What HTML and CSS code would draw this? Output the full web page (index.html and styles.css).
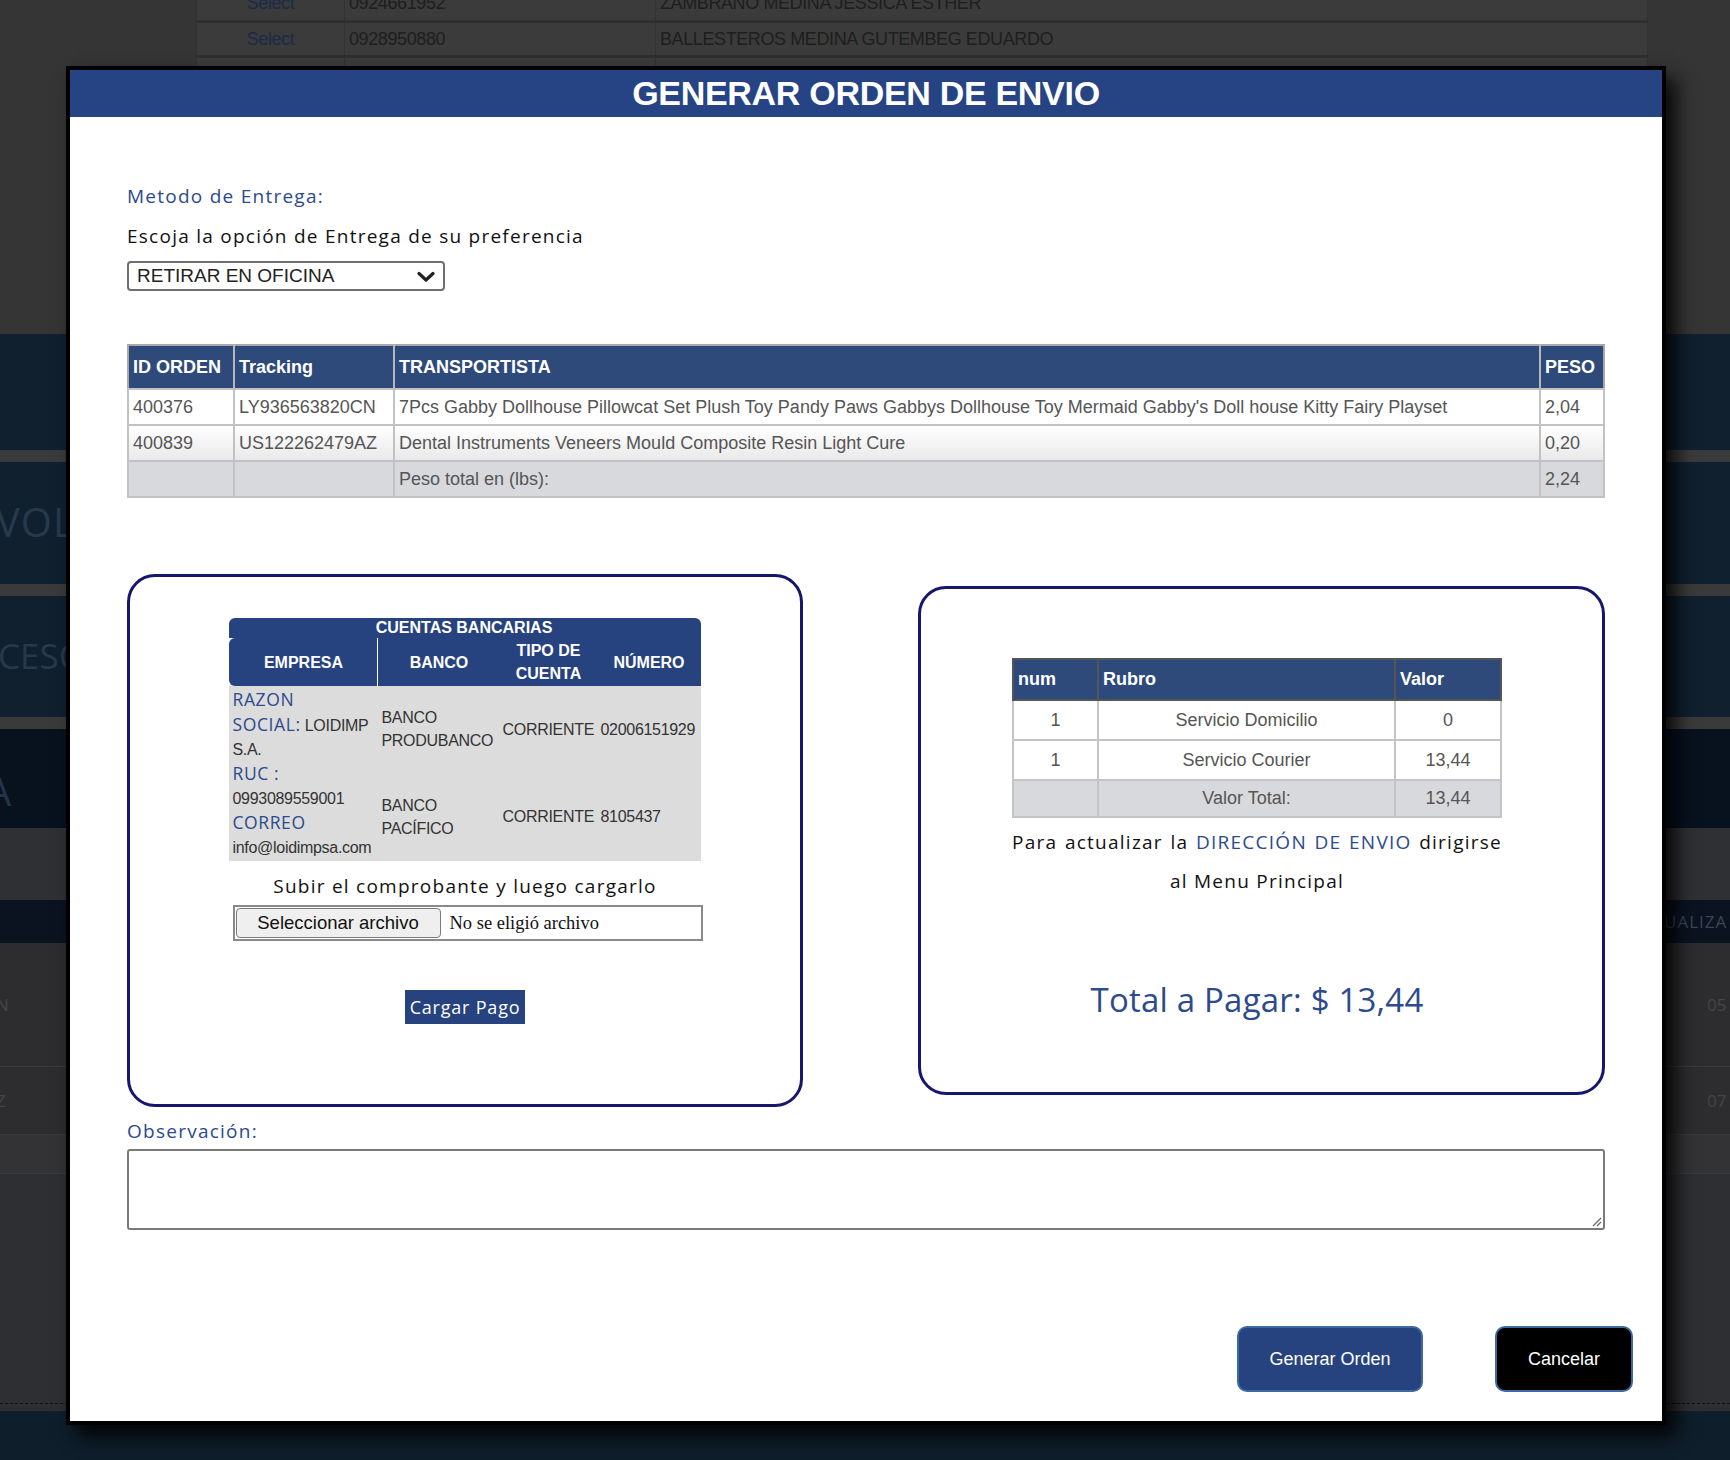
FILE: index.html
```html
<!DOCTYPE html>
<html lang="es">
<head>
<meta charset="utf-8">
<title>Generar Orden de Envio</title>
<link rel="stylesheet" href="styles.css">
</head>
<body>
<div class="page">
  <div class="top">
    <table class="bg-table">
      <tr><td class="sel">Select</td><td>0924661952</td><td>ZAMBRANO MEDINA JESSICA ESTHER</td></tr>
      <tr><td class="sel">Select</td><td>0928950880</td><td>BALLESTEROS MEDINA GUTEMBEG EDUARDO</td></tr>
      <tr><td class="sel"></td><td></td><td></td></tr>
    </table>
  </div>
  <div class="band b1"></div>
  <div class="sep"></div>
  <div class="band b2"><span class="band-txt">VOLUCIONES</span></div>
  <div class="sep"></div>
  <div class="band b3"><span class="band-txt">CESOS</span></div>
  <div class="sep"></div>
  <div class="band b4"><span class="band-txt cut">A</span></div>
  <div class="gap"></div>
  <div class="bg-head"><span class="ualiza">UALIZA</span></div>
  <div class="bg-row r1"><span class="l">N</span><span class="r">05</span></div>
  <div class="bg-row r2"><span class="l">Z</span><span class="r">07</span></div>
  <div class="bg-row r3"></div>
  <div class="bg-fill"></div>
  <div class="bg-foot"></div>
</div>

<div class="modal">
  <div class="modal-head">GENERAR ORDEN DE ENVIO</div>
  <div class="modal-body">
    <div class="mtext blue">Metodo de Entrega:</div>
    <div class="mtext choose">Escoja la opción de Entrega de su preferencia</div>
    <div class="select">
      <span>RETIRAR EN OFICINA</span>
      <svg class="chev" width="18" height="12" viewBox="0 0 18 12"><path d="M2 2.5 L9 9 L16 2.5" fill="none" stroke="#222" stroke-width="3.2" stroke-linecap="round" stroke-linejoin="round"/></svg>
    </div>

    <table class="orders">
      <colgroup><col class="c-id"><col class="c-tr"><col class="c-desc"><col class="c-peso"></colgroup>
      <thead>
        <tr><th>ID ORDEN</th><th>Tracking</th><th>TRANSPORTISTA</th><th>PESO</th></tr>
      </thead>
      <tbody>
        <tr class="w"><td>400376</td><td>LY936563820CN</td><td>7Pcs Gabby Dollhouse Pillowcat Set Plush Toy Pandy Paws Gabbys Dollhouse Toy Mermaid Gabby's Doll house Kitty Fairy Playset</td><td>2,04</td></tr>
        <tr class="g"><td>400839</td><td>US122262479AZ</td><td>Dental Instruments Veneers Mould Composite Resin Light Cure</td><td>0,20</td></tr>
        <tr class="t"><td></td><td></td><td>Peso total en (lbs):</td><td>2,24</td></tr>
      </tbody>
    </table>

    <div class="boxes">
      <div class="box box-left">
        <table class="bank">
          <colgroup><col class="b-emp"><col class="b-ban"><col class="b-tipo"><col class="b-num"></colgroup>
          <thead>
            <tr><th colspan="4" class="title">CUENTAS BANCARIAS</th></tr>
            <tr><th class="emp">EMPRESA</th><th>BANCO</th><th>TIPO DE CUENTA</th><th>NÚMERO</th></tr>
          </thead>
          <tbody>
            <tr class="br1">
              <td rowspan="2" class="empresa">
                <span class="bl">RAZON</span><br>
                <span class="bl">SOCIAL:</span> LOIDIMP<br>S.A.<br>
                <span class="bl">RUC :</span><br>0993089559001<br>
                <span class="bl">CORREO</span><br>info@loidimpsa.com
              </td>
              <td>BANCO PRODUBANCO</td><td>CORRIENTE</td><td>02006151929</td>
            </tr>
            <tr class="br2"><td>BANCO PACÍFICO</td><td>CORRIENTE</td><td>8105437</td></tr>
          </tbody>
        </table>
        <div class="upload-txt">Subir el comprobante y luego cargarlo</div>
        <div class="file">
          <span class="file-btn">Seleccionar archivo</span>
          <span class="file-none">No se eligió archivo</span>
        </div>
        <button class="cargar">Cargar Pago</button>
      </div>

      <div class="box box-right">
        <table class="rubros">
          <colgroup><col class="r-num"><col class="r-rub"><col class="r-val"></colgroup>
          <thead><tr><th>num</th><th>Rubro</th><th>Valor</th></tr></thead>
          <tbody>
            <tr><td>1</td><td>Servicio Domicilio</td><td>0</td></tr>
            <tr><td>1</td><td>Servicio Courier</td><td>13,44</td></tr>
            <tr class="t"><td></td><td>Valor Total:</td><td>13,44</td></tr>
          </tbody>
        </table>
        <div class="note">
          <div class="note-l1">Para actualizar la <span class="bl">DIRECCIÓN DE ENVIO</span> dirigirse</div>
          <div class="note-l2">al Menu Principal</div>
        </div>
        <div class="total">Total a Pagar: $ 13,44</div>
      </div>
    </div>

    <div class="mtext blue obs">Observación:</div>
    <div class="textarea">
      <svg class="grip" width="12" height="12" viewBox="0 0 12 12"><path d="M11 3 L3 11 M11 7 L7 11" stroke="#666" stroke-width="1.2" fill="none"/></svg>
    </div>
  </div>
  <div class="actions">
    <button class="btn gen">Generar Orden</button>
    <button class="btn cancel">Cancelar</button>
  </div>
</div>
</body>
</html>
```

FILE: styles.css
```css
* { box-sizing: border-box; }
html, body { margin: 0; padding: 0; }
body {
  width: 1730px;
  height: 1460px;
  overflow: hidden;
  background: #353535;
  font-family: "Liberation Sans", Arial, sans-serif;
  position: relative;
}

/* ---------- background page (dimmed) ---------- */
.page { width: 1730px; }
.top {
  height: 334px;
  background: #353535;
  padding-left: 196px;
  overflow: hidden;
}
.bg-table {
  width: 1452px;
  margin-top: -14px;
  border-collapse: collapse;
  background: #3b3b3b;
  font-size: 18px;
  color: #1e1e1e;
}
.bg-table td {
  height: 35px;
  padding: 0 4px;
  border: 1px solid #323232;
  border-bottom: 3px solid #2f2f2f;
  letter-spacing: -0.4px;
}
.bg-table td:nth-child(1) { width: 148px; text-align: center; color: #1b2a48; }
.bg-table td:nth-child(2) { width: 311px; }

.band { position: relative; overflow: hidden; background: #10202f; }
.b1 { height: 116px; }
.b2 { height: 122px; }
.b3 { height: 121px; }
.b4 { height: 99px; background: #08111e; }
.sep { height: 12px; background: #3a3a3a; }
.band-txt {
  display: block;
  font-family: "Open Sans", sans-serif;
  font-size: 40px;
  line-height: 1;
  color: #27394c;
  letter-spacing: 1px;
  padding-top: 40px;
  margin-left: -4px;
}
.b3 .band-txt { font-size: 35px; letter-spacing: 0; margin-left: -2px; padding-top: 42px; }
.b4 .band-txt { padding-top: 42px; color: #23344a; }
.band-txt.cut { margin-left: -14px; }
.gap { height: 72px; background: #2f3034; }
.bg-head {
  height: 43px;
  background: #0b1320;
  display: flex;
  justify-content: flex-end;
  align-items: center;
}
.ualiza {
  width: 66px;
  font-family: "Open Sans", sans-serif;
  font-size: 17px;
  color: #3b4654;
  letter-spacing: 1px;
  overflow: hidden;
  white-space: nowrap;
}
.bg-row {
  display: flex;
  justify-content: space-between;
  align-items: center;
  background: #2d2d2f;
  border-bottom: 1px solid #3a3a3c;
  font-family: "Open Sans", sans-serif;
  font-size: 17px;
  color: #454545;
}
.r1 { height: 124px; }
.r2 { height: 68px; }
.r3 { height: 39px; background: #333336; }
.bg-row .l { margin-left: -4px; }
.bg-row .r { width: 23px; overflow: hidden; }
.bg-fill {
  height: 230px;
  background: #2e2f33;
  border-bottom: 1px dashed #111;
}
.bg-foot { height: 60px; border-top: 7px solid #2e2f33; background: #0f1e2b; }

/* ---------- modal ---------- */
.modal {
  position: absolute;
  left: 66px;
  top: 66px;
  width: 1600px;
  border: 4px solid #000;
  background: #fff;
  box-shadow: 10px 12px 18px rgba(0,0,0,0.85);
}
.modal-head {
  height: 47px;
  background: #264384;
  color: #fff;
  text-align: center;
  font-family: "Liberation Sans", Arial, sans-serif;
  font-weight: bold;
  font-size: 34px;
  line-height: 46px;
  letter-spacing: -0.3px;
}
.modal-body {
  padding: 66px 57px 0 57px;
}
.mtext {
  font-family: "Open Sans", sans-serif;
  font-size: 19px;
  line-height: 26px;
  color: #111;
  letter-spacing: 1.25px;
}
.blue { color: #2c4a8c; }
.choose { margin-top: 14px; }
.select {
  margin-top: 12px;
  width: 318px;
  height: 30px;
  border: 2px solid #6f6f6f;
  border-radius: 4px;
  display: flex;
  align-items: center;
  justify-content: space-between;
  padding: 0 8px 0 8px;
  font-size: 19px;
  color: #222;
}
.chev { margin-top: 1px; }

/* orders table */
.orders {
  margin-top: 53px;
  width: 1478px;
  border-collapse: collapse;
  table-layout: fixed;
  border: 2px solid #a8a8a8;
  font-size: 18px;
}
.c-id { width: 106px; }
.c-tr { width: 160px; }
.c-peso { width: 64px; }
.orders th {
  height: 44px;
  background: #2d4a7b;
  color: #fff;
  font-weight: bold;
  text-align: left;
  padding: 0 4px;
  border-left: 2px solid #b8b8b8;
}
.orders th:first-child { border-left: 0; }
.orders td {
  height: 36px;
  padding: 0 4px;
  color: #555;
  border: 2px solid #c2c2c2;
  white-space: nowrap;
  overflow: hidden;
}
.orders tr.w td { background: #fff; }
.orders tr.g td { background: linear-gradient(#ffffff, #e9e9e9); }
.orders tr.t td { background: #d8d9dc; }

/* boxes */
.boxes {
  margin-top: 76px;
  display: flex;
  justify-content: space-between;
  align-items: center;
}
.box {
  border: 3px solid #16166c;
  border-radius: 28px;
  background: #fff;
  display: flex;
  flex-direction: column;
  align-items: center;
}
.box-left { width: 676px; height: 533px; padding-top: 41px; }
.box-right { width: 687px; height: 509px; padding-top: 69px; padding-right: 9px; }

.bank {
  width: 471px;
  border-collapse: separate;
  border-spacing: 0;
  table-layout: fixed;
  font-size: 16px;
}
.b-emp { width: 149px; }
.b-ban { width: 121px; }
.b-tipo { width: 98px; }
.b-num { width: 103px; }
.bank th {
  background: #26427f;
  color: #fff;
  font-weight: bold;
  font-size: 16px;
  line-height: 23px;
  padding: 0 2px;
  text-align: center;
}
.bank th.title {
  height: 20px;
  line-height: 18px;
  border-radius: 6px 6px 0 0;
  padding-left: 0;
}
.bank thead tr:nth-child(2) th { height: 48px; }
.bank th.emp { border-radius: 6px 0 0 6px; border-right: 1px solid #fff; }
.bank td {
  background: #dcdcdc;
  color: #333;
  padding: 0 3px;
  line-height: 23px;
  letter-spacing: -0.3px;
  vertical-align: middle;
}
.bank td.empresa {
  line-height: 24.5px;
  padding: 3px 0 0 3px;
  vertical-align: top;
  white-space: nowrap;
}
.bank tr.br1 td { height: 86px; }
.bank tr.br2 td { height: 89px; }
.bank .bl {
  font-family: "Open Sans", sans-serif;
  font-size: 17.5px;
  line-height: 18px;
  color: #2c4a8c;
  letter-spacing: 0.6px;
}
.upload-txt {
  margin-top: 13px;
  font-family: "Open Sans", sans-serif;
  font-size: 19px;
  line-height: 24px;
  color: #111;
  letter-spacing: 1.25px;
}
.file {
  margin-top: 7px;
  width: 470px;
  height: 36px;
  margin-left: 5px;
  border: 2px solid #8a8a8a;
  display: flex;
  align-items: center;
  padding: 1px;
}
.file-btn {
  width: 205px;
  height: 30px;
  background: #efefef;
  border: 1.5px solid #7b7b7b;
  border-radius: 4px;
  font-size: 18.5px;
  color: #111;
  display: flex;
  align-items: center;
  justify-content: center;
}
.file-none {
  margin-left: 9px;
  font-family: "Liberation Serif", "Times New Roman", serif;
  font-size: 18.5px;
  color: #111;
}
.cargar {
  margin-top: 49px;
  width: 120px;
  height: 34px;
  border: 0;
  background: #26427f;
  color: #fff;
  font-family: "Open Sans", sans-serif;
  font-size: 18px;
  letter-spacing: 0.8px;
  padding: 0;
}

.rubros {
  width: 490px;
  border-collapse: collapse;
  table-layout: fixed;
  font-size: 18px;
  border: 2px solid #b8b8b8;
}
.r-num { width: 85px; }
.r-val { width: 106px; }
.rubros th {
  height: 41px;
  background: #2d4a7b;
  color: #fff;
  text-align: left;
  padding: 0 4px;
  border: 2px solid #555;
  font-weight: bold;
}
.rubros td {
  height: 40px;
  text-align: center;
  color: #555;
  border: 2px solid #c4c4c4;
}
.rubros tr.t td { background: #d8d9dc; height: 37px; }
.note {
  width: 490px;
  font-family: "Open Sans", sans-serif;
  font-size: 19px;
  line-height: 39px;
  color: #111;
  letter-spacing: 1.25px;
}
.note .bl { color: #2c4a8c; }
.note-l1 { text-align: justify; text-align-last: justify; margin-top: 5px; }
.note-l2 { text-align: center; }
.total {
  margin-top: 74px;
  font-family: "Open Sans", sans-serif;
  font-size: 33px;
  line-height: 50px;
  color: #2c4a8c;
  letter-spacing: 0.2px;
}

.obs { margin-top: 11px; }
.textarea {
  margin-top: 5px;
  width: 1478px;
  height: 81px;
  border: 2px solid #7a7a7a;
  border-radius: 3px;
  position: relative;
}
.grip { position: absolute; right: 1px; bottom: 1px; }

.actions {
  display: flex;
  justify-content: flex-end;
  gap: 72px;
  padding: 96px 29px 29px 0;
}
.btn {
  height: 66px;
  border-radius: 10px;
  border: 2px solid #3d6aa0;
  color: #fff;
  font-family: "Liberation Sans", Arial, sans-serif;
  font-size: 18px;
  padding: 0;
}
.gen { width: 186px; background: #26437f; }
.cancel { width: 138px; background: #000; }
```
